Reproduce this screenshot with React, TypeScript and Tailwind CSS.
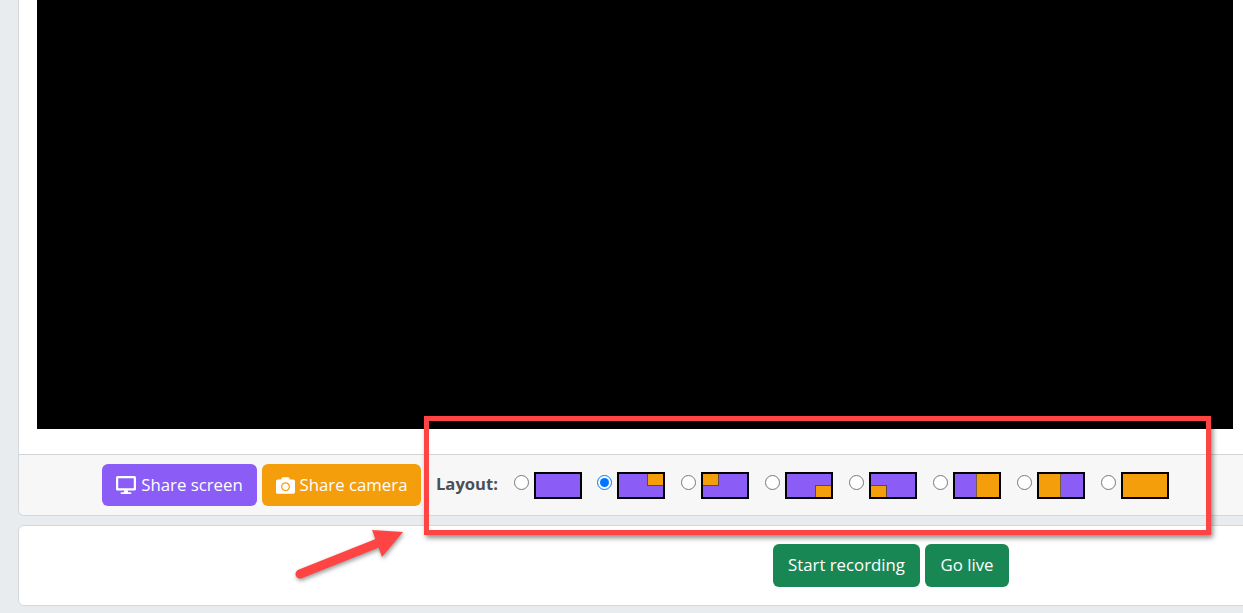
import { FaCamera, FaDesktop } from 'react-icons/fa';

type Layout = 'full' | 'tr' | 'tl' | 'br' | 'bl' | 'left' | 'right' | 'cam';

const layouts: Layout[] = ['full', 'tr', 'tl', 'br', 'bl', 'left', 'right', 'cam'];

const Thumb = ({ kind }: { kind: Layout }) => {
  const isSplit = kind === 'left' || kind === 'right';
  return (
    <div className={`relative flex w-[48px] h-[27px] border-2 border-black overflow-hidden ${kind === 'cam' ? 'bg-[#f59e0b]' : 'bg-[#8b5cf6]'}`}>
      {isSplit && (
        <>
          <div className={`flex-1 ${kind === 'left' ? 'bg-[#8b5cf6]' : 'bg-[#f59e0b] border-r border-[#7a5a3a]'}`}></div>
          <div className={`flex-1 ${kind === 'left' ? 'bg-[#f59e0b] border-l border-[#7a5a3a]' : 'bg-[#8b5cf6]'}`}></div>
        </>
      )}
      {kind === 'tr' && <div className="absolute top-0 right-0 w-[16px] h-[12px] bg-[#f59e0b] border-l border-b border-[#5f4a3a]"></div>}
      {kind === 'tl' && <div className="absolute top-0 left-0 w-[16px] h-[12px] bg-[#f59e0b] border-r border-b border-[#5f4a3a]"></div>}
      {kind === 'br' && <div className="absolute bottom-0 right-0 w-[16px] h-[12px] bg-[#f59e0b] border-l border-t border-[#5f4a3a]"></div>}
      {kind === 'bl' && <div className="absolute bottom-0 left-0 w-[16px] h-[12px] bg-[#f59e0b] border-r border-t border-[#5f4a3a]"></div>}
    </div>
  );
};

const App = () => {
  return (
    <div className="relative h-[613px] w-[1243px] overflow-hidden bg-[#e9ecef] pl-[18px] font-['Open_Sans',sans-serif]">
      {/* Main card */}
      <div className="w-[1235px] bg-white border-x border-b border-[#d5d7d9] rounded-b-md">
        <div className="px-[18px] pb-[25px]">
          <div className="h-[429px] w-[1196px] bg-black"></div>
        </div>
        <div className="flex items-center h-[61px] pl-[83px] bg-[#f7f7f7] border-t border-[#d2d4d6] rounded-b-md">
          <button className="flex items-center gap-[5px] h-[42px] w-[155px] justify-center rounded-md bg-[#8b5cf6] text-white text-[16.8px]">
            <FaDesktop size={20} />
            Share screen
          </button>
          <button className="flex items-center gap-[5px] h-[42px] w-[159px] justify-center rounded-md bg-[#f59e0b] text-white text-[16.8px] ml-[5px]">
            <FaCamera size={19} />
            Share camera
          </button>
          <span className="ml-[15px] mb-[2px] w-[77.6px] text-[16.6px] font-bold text-[#495057]">Layout:</span>
          <div className="flex gap-[15.86px]">
            {layouts.map((kind) => (
              <label key={kind} className="flex gap-[5px]">
                <input type="radio" name="layout" defaultChecked={kind === 'tr'} className="w-[15px] h-[15px] m-0 mt-[3px]" />
                <Thumb kind={kind} />
              </label>
            ))}
          </div>
        </div>
      </div>

      {/* Recording card */}
      <div className="mt-[9px] flex items-center gap-[5px] h-[81px] w-[1235px] pl-[754px] pb-[1px] bg-white border border-[#d5d7d9] rounded-md">
        <button className="h-[43px] w-[147px] rounded-md bg-[#198754] text-white text-[16.8px]">Start recording</button>
        <button className="h-[43px] w-[84px] rounded-md bg-[#198754] text-white text-[16.8px]">Go live</button>
      </div>

      {/* Annotation on top of the screenshot */}
      <div className="absolute left-[424px] top-[416px] w-[787px] h-[119px] border-[5px] border-[#ff4444] shadow-[2px_3px_5px_rgba(0,0,0,0.45)]"></div>
      <svg className="absolute left-[290px] top-[525px] drop-shadow-[1px_2px_2px_rgba(0,0,0,0.4)]" width="120" height="60" viewBox="0 0 120 60">
        <path d="M10 49 L98 14" stroke="#ff4444" strokeWidth="9" strokeLinecap="round" />
        <path d="M82 5 L113 7 L92 32 Z" fill="#ff4444" />
      </svg>
    </div>
  );
};

export default App;
